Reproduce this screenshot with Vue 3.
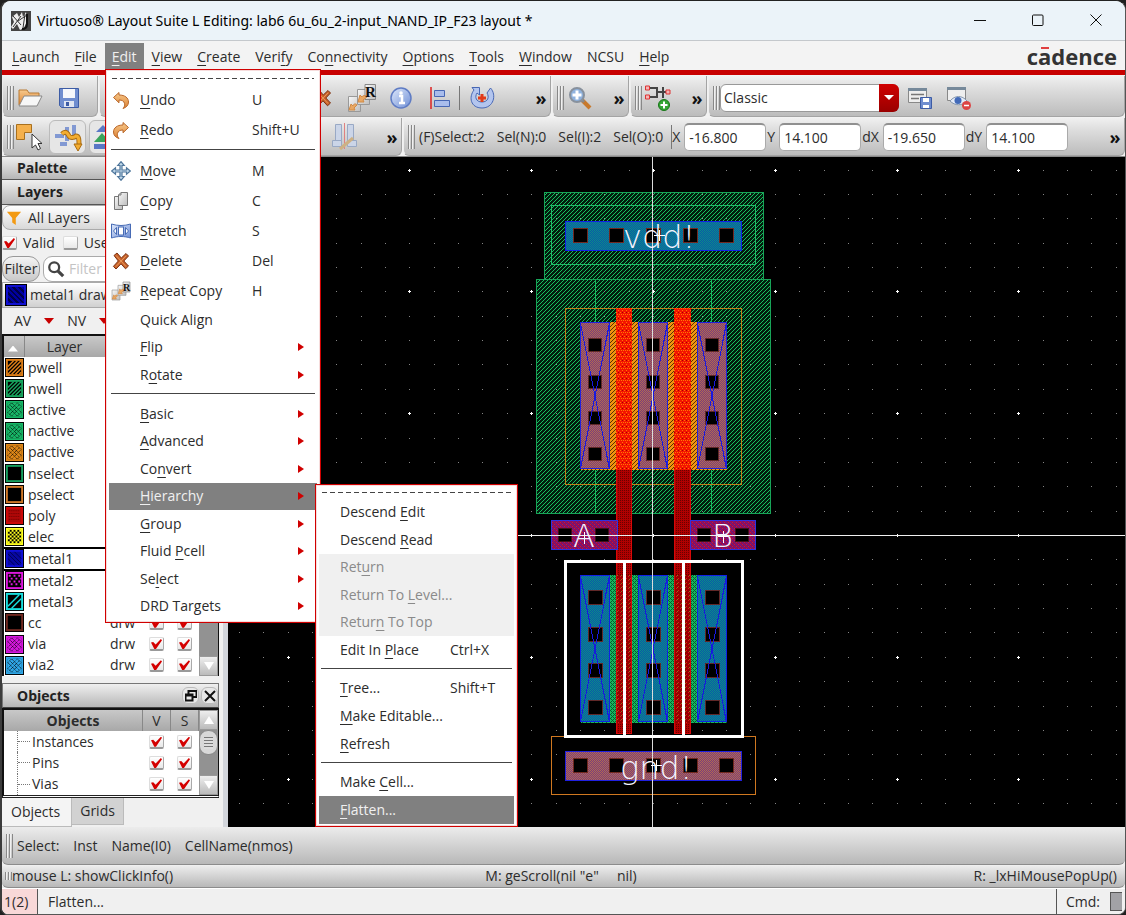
<script setup>
import { ref } from 'vue'

const menus = ['&Launch', '&File', '&Edit', '&View', '&Create', 'Veri&fy', 'Co&nnectivity', '&Options', '&Tools', '&Window', 'NCSU', '&Help']

const history = [
  { label: '&Undo', key: 'U', icon: 'undo' },
  { label: '&Redo', key: 'Shift+U', icon: 'redo' },
]
const actions = [
  { label: '&Move', key: 'M', icon: 'move' },
  { label: '&Copy', key: 'C', icon: 'copy' },
  { label: '&Stretch', key: 'S', icon: 'stretch' },
  { label: '&Delete', key: 'Del', icon: 'delete' },
  { label: '&Repeat Copy', key: 'H', icon: 'repeat' },
]
const transforms = [
  { label: 'Quick Align' },
  { label: '&Flip', sub: true },
  { label: 'R&otate', sub: true },
]
const groups = ['&Basic', '&Advanced', 'Co&nvert', '&Hierarchy', '&Group', 'Fluid &Pcell', 'Se&lect', 'DRD Targets']

const hierarchy = [
  { size: 'six', items: [
    { label: 'Descend &Edit' },
    { label: 'Descend &Read' },
    { label: 'Ret&urn', off: true },
    { label: 'Return To &Level...', off: true },
    { label: 'Retur&n To Top', off: true },
    { label: 'Edit In &Place', key: 'Ctrl+X' },
  ] },
  { size: 'three', items: [
    { label: '&Tree...', key: 'Shift+T' },
    { label: '&Make Editable...' },
    { label: '&Refresh' },
  ] },
  { size: 'two', items: [
    { label: 'Make &Cell...' },
    { label: '&Flatten...', hot: true },
  ] },
]

function parts(label) {
  const i = label.indexOf('&')
  if (i < 0) return [label, '', '']
  return [label.slice(0, i), label[i + 1], label.slice(i + 2)]
}

const layers = [
  ['pwell', '#e08018', 'hatch'], ['nwell', '#18a860', 'hatch'], ['active', '#18b868', 'cross'],
  ['nactive', '#18b868', 'cross'], ['pactive', '#e08818', 'cross'], ['nselect', '#18a060', 'none'],
  ['pselect', '#d07828', 'none'], ['poly', '#d00808', 'dots'], ['elec', '#ffff20', 'check'],
  ['metal1', '#1010d8', 'back'], ['metal2', '#e018e0', 'star'], ['metal3', '#18e0e0', 'slash'],
  ['cc', '#702820', 'none'], ['via', '#d818e0', 'cross'], ['via2', '#30a8e8', 'cross'],
].map(([name, color, fill]) => ({ name, color, fill, v: true, s: true }))

const objects = ['Instances', 'Pins', 'Vias']
const coords = [['X', '-16.800'], ['Y', '14.100'], ['dX', '-19.650'], ['dY', '14.100']]
const preset = ref('Classic')

const originX = 653
const originY = 535
const pitch = 1218 / 50
let minor = ''
let major = ''
for (let i = -18; i <= 60; i++) {
  for (let j = -16; j <= 40; j++) {
    const x = Math.round(originX + i * pitch)
    const y = Math.round(originY + j * pitch)
    if (i % 5 === 0 && j % 5 === 0) major += `M${x - 1} ${y}.5h3M${x}.5 ${y - 1}v3`
    else minor += `M${x} ${y}.5h1`
  }
}
const columns = [580.5, 638.5, 697.5]
const barContacts = [573, 609, 646, 683, 719]
const upperContacts = [338, 375, 411, 447]
const lowerContacts = [590, 627, 663, 700]
</script>

<template>
  <div class="window">
    <svg class="defs" aria-hidden="true">
      <defs>
        <linearGradient id="gOrange" x1="0" y1="0" x2="0" y2="1"><stop offset="0" stop-color="#f7c98c" /><stop offset="1" stop-color="#dd8233" /></linearGradient>
        <linearGradient id="gBlue" x1="0" y1="0" x2="1" y2="1"><stop offset="0" stop-color="#dfe9fb" /><stop offset="1" stop-color="#6f8fd6" /></linearGradient>
        <linearGradient id="gPage" x1="0" y1="0" x2="1" y2="1"><stop offset="0" stop-color="#f8f8f8" /><stop offset="1" stop-color="#bdbdbd" /></linearGradient>
      </defs>
      <symbol id="undo" viewBox="0 0 20 20"><path d="M2.500 7.500 8 2.500V5c6 0 9.500 3 9.500 7 0 3.500-2.500 5.500-5.500 6.500 1.500-1.800 2-3 1.600-4.800C13 11 11 10 8 10v2.800z" fill="url(#gOrange)" stroke="#b9672a" /></symbol>
      <symbol id="redo" viewBox="0 0 20 20"><path d="M17.500 7.500 12 2.500V5C6 5 2.500 8 2.500 12c0 3.500 2.500 5.500 5.500 6.500-1.500-1.800-2-3-1.600-4.800C7 11 9 10 12 10v2.800z" fill="url(#gOrange)" stroke="#b9672a" /></symbol>
      <symbol id="move" viewBox="0 0 20 20"><path d="M10 .7 13.200 4.500H11v4.500h4.500V6.800L19.300 10l-3.800 3.200V11H11v4.500h2.200L10 19.300l-3.200-3.800H9V11H4.500v2.200L.7 10l3.800-3.200V9H9V4.500H6.800z" fill="#c2d9ea" stroke="#50779c" stroke-width="1.200" /></symbol>
      <symbol id="copy" viewBox="0 0 20 20"><path d="M3.500 5.500h8v13h-8z" fill="url(#gPage)" stroke="#777" /><path d="m10 1.500h6.500v13h-9V4z" fill="url(#gPage)" stroke="#777" /><path d="M10 1.500V4H7.500" fill="none" stroke="#777" /></symbol>
      <symbol id="stretch" viewBox="0 0 20 20"><path d="M.5 3c6 2 13 2 19 0v14c-6-2-13-2-19 0z" fill="url(#gBlue)" stroke="#476bb5" /><rect x="7.500" y="6" width="5" height="8" fill="#fff" stroke="#476bb5" /><path d="M5.500 6.500 2.500 10l3 3.500zm9 0 3 3.500-3 3.500z" fill="#fff" stroke="#476bb5" /></symbol>
      <symbol id="delete" viewBox="0 0 20 20"><path d="m3 4.500 3-2.500 4.300 5L15 2.500 17.500 5l-4.700 5 4.700 5-3 2.800-4.500-5L5 18l-2.600-2.600L7.300 10z" fill="#c9622a" stroke="#7b3010" /><path d="m5 4.500 10 11M15 4.800 5 15.500" stroke="#e79a5c" /></symbol>
      <symbol id="repeat" viewBox="0 0 30 30"><path d="M1.500 13.500h12v15h-12z" fill="url(#gPage)" stroke="#999" /><path d="M10.500 6.500h12v15h-12z" fill="url(#gPage)" stroke="#999" /><path d="M18 1.500h10.500v15H18z" fill="url(#gPage)" stroke="#888" /><path d="m2 27 2-6 2 2c0-2 3-3 4-1l-3 3 1 2zM11 19l2-7 2 2c1-2 4-2 5 0l-4 3 1 2z" fill="#e9a763" stroke="#d08a45" /></symbol>
    </svg>

    <header class="title">
      <svg class="logo" viewBox="0 0 20 20"><rect width="20" height="20" fill="#444" /><path d="M1 6l5-4 2 4 3-5 1 5 3-5 1 9-3 7-4 2-3-6-4 5-2-2 3-5z" fill="#eee" /><path d="m2 5 8 9m-8 2 8-11m4-2-2 14m-5-7 9-6" stroke="#333" fill="none" /><path d="M16 3v10c0 3-2 5-5 5" stroke="#111" stroke-width="2" fill="none" /></svg>
      <h1>Virtuoso® Layout Suite L Editing: lab6 6u_6u_2-input_NAND_IP_F23 layout *</h1>
      <div class="controls">
        <button aria-label="Minimize"><svg viewBox="0 0 12 12"><path d="M0 6.500h12" /></svg></button>
        <button aria-label="Maximize"><svg viewBox="0 0 12 12"><rect x=".5" y="1" width="10.500" height="10.500" rx="1" /></svg></button>
        <button aria-label="Close"><svg viewBox="0 0 12 12"><path d="m.5.5 11 11m0-11-11 11" /></svg></button>
      </div>
    </header>

    <nav class="menubar">
      <button v-for="m in menus" :key="m" :class="{ open: m === '&Edit' }">{{ parts(m)[0] }}<u>{{ parts(m)[1] }}</u>{{ parts(m)[2] }}</button>
      <div class="brand">c<span class="macron">a</span>dence</div>

      <div class="menu edit-menu" role="menu">
        <div class="tear"></div>
        <button v-for="it in history" :key="it.label" class="item tall" role="menuitem">
          <svg class="mi"><use :href="'#' + it.icon" /></svg>
          <span class="label">{{ parts(it.label)[0] }}<u>{{ parts(it.label)[1] }}</u>{{ parts(it.label)[2] }}</span><span class="key">{{ it.key }}</span>
        </button>
        <hr>
        <button v-for="it in actions" :key="it.label" class="item tall" role="menuitem">
          <svg class="mi"><use :href="'#' + it.icon" /><text v-if="it.icon === 'repeat'" x="12" y="10" class="r-small">R</text></svg>
          <span class="label">{{ parts(it.label)[0] }}<u>{{ parts(it.label)[1] }}</u>{{ parts(it.label)[2] }}</span><span class="key">{{ it.key }}</span>
        </button>
        <div class="rows three">
          <button v-for="it in transforms" :key="it.label" class="item" role="menuitem">
            <span class="label">{{ parts(it.label)[0] }}<u>{{ parts(it.label)[1] }}</u>{{ parts(it.label)[2] }}</span><i v-if="it.sub" class="arrow"></i>
          </button>
        </div>
        <hr>
        <div class="rows eight">
          <div v-for="g in groups" :key="g" class="slot">
            <button class="item" :class="{ hot: g === '&Hierarchy' }" role="menuitem">
              <span class="label">{{ parts(g)[0] }}<u>{{ parts(g)[1] }}</u>{{ parts(g)[2] }}</span><i class="arrow"></i>
            </button>
            <div v-if="g === '&Hierarchy'" class="menu sub-menu" role="menu">
              <div class="tear"></div>
              <template v-for="(sec, n) in hierarchy" :key="n">
                <hr v-if="n">
                <div class="rows" :class="sec.size">
                  <button v-for="it in sec.items" :key="it.label" class="item" :class="{ hot: it.hot }" :disabled="it.off" role="menuitem">
                    <span class="label">{{ parts(it.label)[0] }}<u>{{ parts(it.label)[1] }}</u>{{ parts(it.label)[2] }}</span><span class="key">{{ it.key }}</span>
                  </button>
                </div>
              </template>
            </div>
          </div>
        </div>
      </div>
    </nav>

    <div class="toolbars">
      <div class="bar upper">
        <div class="seg files">
          <i class="grip"></i>
          <button aria-label="Open"><svg viewBox="0 0 26 26"><path d="M2 20V5h8l2 3h10v5" fill="url(#gOrange)" stroke="#b97a35" /><path d="M2 21 7 11h18l-5 10z" fill="#f7f7f7" stroke="#888" /></svg></button>
          <button aria-label="Save"><svg viewBox="0 0 26 26"><path d="M3.500 3.500h19v19h-17l-2-2z" fill="#6f8dcf" stroke="#3d5ca5" /><path d="M7 4h12v9H7z" fill="#f5f7fb" /><path d="M8 16h10v6H8z" fill="#dfe5f2" /><path d="M10 17h3v4h-3z" fill="#3d5ca5" /></svg></button>
        </div>
        <div class="seg edit-tools">
          <button aria-label="Delete"><svg class="small" viewBox="0 0 20 20"><use href="#delete" /></svg></button>
          <button aria-label="Repeat copy"><svg class="big" viewBox="0 0 30 30"><use href="#repeat" /><text x="18" y="14" class="r-mark">R</text></svg></button>
          <button aria-label="Properties"><svg viewBox="0 0 26 26"><circle cx="13" cy="13" r="10" fill="url(#gBlue)" stroke="#5f7cc4" stroke-width="1.500" /><path d="M11 11h3v7m-3 0h6" stroke="#fff" stroke-width="2.500" fill="none" /><circle cx="13" cy="8" r="1.800" fill="#fff" /></svg></button>
          <button aria-label="Align"><svg viewBox="0 0 26 26"><path d="M4 2v22" stroke="#d22" stroke-width="1.500" /><path d="M7.500 5.500h10v6h-10zm0 10h15v6h-15z" fill="#a9bdec" stroke="#4767b4" /></svg></button>
          <i class="line"></i>
          <button aria-label="Rotate"><svg viewBox="0 0 26 26"><path d="M3 2.500h7.500V10L8 8c-2.500 4-1 9 5 9s7.500-5 5-9l3.500-5c6.500 7 3 20-8.500 20S-.5 12 5 5z" fill="#b3c5ee" stroke="#4767b4" /><path d="M13 9v8m-4-4h8" stroke="#e23a18" stroke-width="3" /></svg></button>
          <span class="more">»</span>
        </div>
        <div class="seg zoom-tools">
          <i class="grip"></i>
          <button aria-label="Zoom in"><svg viewBox="0 0 26 26"><path d="m15 15 8 8" stroke="#c8792c" stroke-width="4" /><path d="m14 14 3 3" stroke="#888" stroke-width="3" /><circle cx="10" cy="10" r="7" fill="#8fb2de" stroke="#88919d" stroke-width="2" /><path d="M10 5.500v9M5.500 10h9" stroke="#fff" stroke-width="3" /></svg></button>
          <span class="more">»</span>
        </div>
        <div class="seg link-tools">
          <i class="grip"></i>
          <button aria-label="Add connection"><svg class="big" viewBox="0 0 30 30"><path d="M6 5h8v9H6m8-5h5m1-5v11m0-6h5" fill="none" stroke="#444" stroke-width="2" /><path d="M2.500 3h4v4h-4zm0 9h4v4h-4zM23 7h4v4h-4z" fill="#f3b5b5" stroke="#d33" /><circle cx="21" cy="22" r="5.500" fill="#33a533" stroke="#177517" /><path d="M21 18.500v7M17.500 22h7" stroke="#fff" stroke-width="2" /></svg></button>
          <span class="more">»</span>
        </div>
        <div class="seg grow">
          <i class="grip"></i>
          <label class="combo"><select v-model="preset" aria-label="Workspace"><option>Classic</option></select><i></i></label>
          <button aria-label="Save workspace"><svg viewBox="0 0 26 26"><path d="M2.500 3.500h18v14h-18z" fill="#eee" stroke="#888" /><path d="M2 3h19v3H2z" fill="#76899a" /><path d="M5 9.500h13M5 13.500h8" stroke="#777" stroke-width="1.500" /><path d="M14.500 12.500h11v11h-11z" fill="#6f8dcf" stroke="#3d5ca5" /><path d="M17 13h6v4h-6zm0 7h6v3h-6z" fill="#fff" /></svg></button>
          <button aria-label="Hide workspace"><svg viewBox="0 0 26 26"><path d="M2.500 2.500h18v13h-18z" fill="#eee" stroke="#888" /><path d="M2 2h19v3H2z" fill="#76899a" /><path d="M5 16c5-6 12-6 17 0-5 5-12 5-17 0z" fill="#e5ecf8" stroke="#8496ad" /><circle cx="13" cy="15.500" r="3.500" fill="#426ab8" /><circle cx="21.500" cy="20.500" r="4.500" fill="#dc4545" /><path d="M19 20.500h5" stroke="#fff" stroke-width="1.500" /></svg></button>
        </div>
      </div>
      <div class="bar lower">
        <div class="seg modes">
          <i class="grip"></i>
          <button aria-label="Select mode"><svg class="big" viewBox="0 0 30 30"><path d="M1.500 2.500h15v8h-7v7h-8z" fill="#f4b04c" stroke="#a8701e" /><path d="M17 12v14l3.500-3 2.500 5 2.500-1.500-2.500-5h4z" fill="#fff" stroke="#333" /></svg></button>
          <button class="pressed" aria-label="Stretch path"><svg class="big" viewBox="0 0 30 30"><path d="M2 12h9v4H2zM12 5h4v14h-4zM19 3h4v13h-4zM7 20h7v4H7z" fill="#8299d3" /><path d="M9 12c4-4 6 0 7 2s5 2 7 0c3 0 3 4 3 8" fill="none" stroke="#a86a10" stroke-width="5" /><path d="M9 12c4-4 6 0 7 2s5 2 7 0c3 0 3 4 3 8" fill="none" stroke="#f3ad31" stroke-width="3" /><path d="M21 22h8l-4 7z" fill="#f3ad31" stroke="#a86a10" /></svg></button>
          <button class="pressed" aria-label="Partial select"><svg class="big" viewBox="0 0 30 30"><path d="m10 3 7 7H3z" fill="#5a78c6" /><path d="m9 11 8 9H1z" fill="#3aa45c" /><path d="M1 22h16v5H1z" fill="#5a78c6" /></svg></button>
          <button class="last" aria-label="Edit guides"><svg class="big" viewBox="0 0 30 30"><path d="M5.500 2.500h6v16h-6zm12 0h6v16h-6zM2.500 18.500h9v6h-9zm15 0h9v6h-9z" fill="#cbd5e8" stroke="#99a9c5" /><path d="M14.500 1v26" stroke="#e08080" /><path d="m10 27 13-11" stroke="#cdb184" stroke-width="3" /></svg></button>
          <span class="more">»</span>
        </div>
        <div class="seg grow stats">
          <i class="grip"></i>
          <span>(F)Select:2</span><span>Sel(N):0</span><span>Sel(I):2</span><span>Sel(O):0</span>
          <i class="line"></i>
          <label v-for="c in coords" :key="c[0]" class="coord">{{ c[0] }}<input :value="c[1]"></label>
          <span class="more">»</span>
        </div>
      </div>
    </div>

    <main>
      <aside class="dock">
        <h2 class="first">Palette</h2>
        <h2>Layers</h2>
        <button class="all"><svg viewBox="0 0 18 18"><path d="M1 2h16l-6 7v8l-4-3V9z" fill="#f39a12" /></svg>All Layers</button>
        <div class="checks"><label><input type="checkbox" checked>Valid</label><label><input type="checkbox">Used</label></div>
        <div class="filter"><button>Filter</button><label class="search"><svg viewBox="0 0 20 20"><circle cx="8" cy="8" r="5.500" fill="none" stroke="#444" stroke-width="2.500" /><path d="m12 12 6 6" stroke="#444" stroke-width="3.500" /></svg><input placeholder="Filter" aria-label="Filter layers"></label></div>
        <button class="current"><i></i>metal1 drawing</button>
        <div class="avnv"><button>AV<i></i></button><button>NV<i></i></button><button>AS<i></i></button></div>

        <div class="grid-box layers">
          <table>
            <thead><tr><th class="c-sw"><i class="sort"></i></th><th class="c-name">Layer</th><th></th><th class="c-box"></th><th class="c-box"></th></tr></thead>
            <tbody>
              <tr v-for="l in layers" :key="l.name" :class="{ sel: l.name === 'metal1' }">
                <td class="c-sw"><svg class="swatch" viewBox="0 0 20 20" :style="{ color: l.color }">
                  <rect width="20" height="20" fill="#000" /><rect x="2" y="2" width="16" height="16" :fill="l.fill === 'dots' ? '#b00808' : l.fill === 'back' ? '#0808a0' : '#000'" stroke="currentColor" stroke-width="2" />
                  <path v-if="l.fill === 'hatch'" d="m3 9 6-6M3 13 13 3M3 17 17 3M7 17 17 7m-6 10 6-6m-2 6 2-2" stroke="currentColor" stroke-width="1.500" />
                  <g v-if="l.fill === 'cross'"><rect x="3" y="3" width="14" height="14" fill="currentColor" /><path d="m3 7 4-4 10 10-4 4L3 7m0 6L13 3l4 4L7 17l-4-4m2-8 10 10M5 15 15 5" fill="none" stroke="#000" stroke-dasharray="1 1" /></g>
                  <path v-if="l.fill === 'dots'" d="M4 5h12M4 8h12M4 11h12M4 14h12" stroke="#600" stroke-dasharray="1 1" />
                  <path v-if="l.fill === 'check'" d="M3 4h14M3 8h14M3 12h14M3 16h14M5 6h12M5 10h12M5 14h12" stroke="currentColor" stroke-width="2" stroke-dasharray="2 2" />
                  <path v-if="l.fill === 'back'" d="m3 5 12 12M3 10l7 7M5 3l12 12M10 3l7 7" stroke="#000050" />
                  <path v-if="l.fill === 'star'" d="M4 5h12M6 8h12M4 11h12M6 14h11" stroke="currentColor" stroke-width="2" stroke-dasharray="2 3" />
                  <path v-if="l.fill === 'slash'" d="M3 15 15 3M7 17 17 7" stroke="currentColor" stroke-width="1.500" />
                </svg></td>
                <td class="c-name">{{ l.name }}</td><td>drw</td>
                <td class="c-box"><input v-model="l.v" type="checkbox" :aria-label="l.name + ' visible'"></td>
                <td class="c-box"><input v-model="l.s" type="checkbox" :aria-label="l.name + ' selectable'"></td>
              </tr>
            </tbody>
          </table>
          <div class="scroll"><button aria-label="Scroll up"><i class="up"></i></button><span class="track"></span><button aria-label="Scroll down"><i class="down"></i></button></div>
        </div>

        <h2 class="objects-title">Objects
          <span><button aria-label="Float"><svg viewBox="0 0 12 12"><path d="M3.500 4V1h8v6H8M.5 4.500h7v6h-7zM.5 5.500h7" /></svg></button><button aria-label="Close panel"><svg viewBox="0 0 12 12"><path d="m1 1 10 10m0-10L1 11" /></svg></button></span>
        </h2>
        <div class="grid-box objects">
          <table>
            <thead><tr><th>Objects</th><th class="c-box">V</th><th class="c-box">S</th></tr></thead>
            <tbody>
              <tr v-for="o in objects" :key="o"><td class="tree"><i></i>{{ o }}</td>
                <td class="c-box"><input type="checkbox" checked :aria-label="o + ' visible'"></td>
                <td class="c-box"><input type="checkbox" checked :aria-label="o + ' selectable'"></td></tr>
            </tbody>
          </table>
          <div class="scroll"><button aria-label="Scroll up"><i class="up"></i></button><span class="track"><b></b></span><button aria-label="Scroll down"><i class="down"></i></button></div>
        </div>
        <div class="tabs"><button class="on">Objects</button><button>Grids</button></div>
      </aside>

      <div class="canvas">
        <svg shape-rendering="crispEdges">
          <defs>
            <pattern id="well" width="4" height="4" patternUnits="userSpaceOnUse"><rect width="4" height="4" fill="#021c0d" /><path d="M0 3h1v1H0zM1 2h1v1H1zM2 1h1v1H2zM3 0h1v1H3z" fill="#16c060" /></pattern>
            <pattern id="teal" width="2" height="2" patternUnits="userSpaceOnUse"><rect width="2" height="2" fill="#0a58a8" /><path d="M0 0h1v1H0zM1 1h1v1H1z" fill="#0c8c88" /></pattern>
            <pattern id="rose" width="2" height="2" patternUnits="userSpaceOnUse"><rect width="2" height="2" fill="#7c3c7c" /><path d="M0 0h1v1H0zM1 1h1v1H1z" fill="#b06c50" /></pattern>
            <pattern id="pact" width="4" height="4" patternUnits="userSpaceOnUse"><rect width="4" height="4" fill="#f09410" /><path d="M0 0h1v1H0zM3 1h1v1H3zM2 2h1v1H2zM1 3h1v1H1z" fill="#5a3200" /></pattern>
            <pattern id="nact" width="4" height="4" patternUnits="userSpaceOnUse"><rect width="4" height="4" fill="#14b860" /><path d="M0 0h1v1H0zM1 1h1v1H1zM3 1h1v1H3zM2 2h1v1H2zM1 3h1v1H1zM3 3h1v1H3z" fill="#065a2c" /></pattern>
            <pattern id="poly" width="2" height="2" patternUnits="userSpaceOnUse"><rect width="2" height="2" fill="#b00000" /><path d="M0 0h1v1H0z" fill="#680000" /></pattern>
            <pattern id="gateP" width="4" height="6" patternUnits="userSpaceOnUse"><rect width="4" height="6" fill="#f41400" /><path d="M0 0h1v1H0zM1 2h1v1H1zM2 4h1v1H2zM3 2h1v1H3z" fill="#ff7a00" /><path d="M2 0h1v1H2z" fill="#a00000" /></pattern>
            <pattern id="gateN" width="4" height="4" patternUnits="userSpaceOnUse"><rect width="4" height="4" fill="#980000" /><path d="M0 0h1v1H0zM2 2h1v1H2z" fill="#e01818" /><path d="M1 3h1v1H1z" fill="#8a7a20" /></pattern>
            <pattern id="plum" width="4" height="4" patternUnits="userSpaceOnUse"><rect width="4" height="4" fill="#980a50" /><path d="M0 0h1v1H0zM1 1h1v1H1zM2 2h1v1H2zM3 3h1v1H3z" fill="#5c2090" /><path d="M2 0h1v1H2zM0 2h1v1H0z" fill="#b81c48" /></pattern>
          </defs>
          <g transform="translate(-228 -157)">
            <g fill="url(#well)" stroke="#18a458"><rect x="544.500" y="192.500" width="219" height="87" /><rect x="536.500" y="279.500" width="234" height="234" /><rect x="551.500" y="205.500" width="204" height="59" fill="none" stroke="#20bc68" /></g>
            <path d="M595.500 280v233M711.500 280v233" stroke="#18b860" />
            <path :d="minor" stroke="#858585" />
            <path :d="major" stroke="#fff" fill="none" />
            <rect x="565.500" y="308.500" width="176" height="176" fill="none" stroke="#c08018" />
            <rect x="551.500" y="736.500" width="204" height="58" fill="none" stroke="#d07820" />
            <rect x="581" y="322" width="146" height="148" fill="url(#pact)" />
            <rect x="581" y="575" width="146" height="148" fill="url(#nact)" />
            <g fill="url(#poly)" stroke="#d80808"><rect x="616.500" y="308.500" width="15" height="425" /><rect x="674.500" y="308.500" width="16" height="425" /></g>
            <path d="M616 308h16v162h-16zM674 308h17v162h-17z" fill="url(#gateP)" />
            <path d="M617 575h14v148h-14zM675 575h15v148h-15z" fill="url(#gateN)" />
            <g v-for="x in columns" :key="x">
              <rect :x="x" y="322.500" width="29" height="146" fill="url(#rose)" stroke="#2020e0" />
              <rect :x="x" y="575.500" width="29" height="146" fill="url(#teal)" stroke="#1020e8" />
              <g fill="#000" stroke="#602828"><rect v-for="y in upperContacts" :key="y" :x="x + 8" :y="y + .5" width="13" height="13" /><rect v-for="y in lowerContacts" :key="y" :x="x + 8" :y="y" width="14" height="14" /></g>
              <path :d="`M${x} 323l29 146m0-146l-29 146M${x} 576l29 146m0-146l-29 146`" stroke="#1818e0" fill="none" />
            </g>
            <rect x="565.500" y="221.500" width="176" height="29" fill="url(#teal)" stroke="#1020e8" />
            <rect x="565.500" y="751.500" width="176" height="29" fill="url(#rose)" stroke="#2020e0" />
            <g fill="#000" stroke="#702820"><template v-for="x in barContacts" :key="x"><rect :x="x + .5" y="228.500" width="14" height="14" /><rect :x="x + .5" y="758.500" width="14" height="14" /></template></g>
            <g fill="url(#plum)" stroke="#3030e0"><rect x="551.500" y="520.500" width="66" height="29" /><rect x="690.500" y="520.500" width="65" height="29" /></g>
            <g fill="#000" stroke="#401018"><rect v-for="x in [558, 595, 697, 735]" :key="x" :x="x + .5" y="528.500" width="13" height="13" /></g>
            <path d="M652.500 157v1200" stroke="#dcdcdc" />
            <path d="M228 535.500h2400" stroke="#f0f0f0" />
            <path d="M565 561h177v175H565zM624 561v175M683 561v175" fill="none" stroke="#fff" stroke-width="3" />
            <path d="M654 235.500h11M659.500 230v11M581 538.500h8M584.500 532v12M718 536.500h10M723.500 531v12M651 765.500h11M656.500 760v11" stroke="#fff" fill="none" />
            <g class="pins"><text x="623" y="248">vdd!</text><text x="620" y="779">gnd!</text><text x="573" y="547">A</text><text x="712" y="547">B</text></g>
          </g>
        </svg>
      </div>
    </main>

    <footer>
      <div class="select-bar"><i class="grip"></i><span>Select:</span><span>Inst</span><span>Name(I0)</span><span>CellName(nmos)</span></div>
      <div class="mouse-bar"><span class="left"><i class="grip small"></i>mouse L: showClickInfo()</span><span class="mid">M: geScroll(nil "e"&nbsp;&nbsp;&nbsp;&nbsp;&nbsp;nil)</span><span class="right">R: _lxHiMousePopUp()</span></div>
      <div class="status"><span class="count">1(2)</span><span class="msg">Flatten...</span><span class="cmd">Cmd:<i></i></span></div>
    </footer>
  </div>
</template>

<style>
html { background: #202020; }
body { margin: 0; }
</style>

<style scoped>
* { box-sizing: border-box; }
.window { display: flex; flex-direction: column; min-height: 100vh; border: 1px solid #555; border-top-color: #222; border-left: 2px solid #3c3c3c; border-radius: 10px 10px 8px 8px; background: #efefef; overflow: hidden; font: 14px/20px "Open Sans", "Noto Sans", sans-serif; color: #2c2c2c; }
button { font: inherit; color: inherit; background: none; border: 0; padding: 0; margin: 0; white-space: nowrap; }
input, select { font: inherit; color: inherit; margin: 0; }
.defs { position: absolute; width: 0; height: 0; }
.r-mark { font: bold 15px "Liberation Serif", serif; fill: #111; }
.r-small { font: bold 10px "Liberation Serif", serif; fill: #111; }
u { text-underline-offset: 3px; text-decoration-thickness: 1px; text-decoration-skip-ink: none; }

.title { display: flex; align-items: center; height: 40px; padding-left: 9px; background: #ebf3f9; border-bottom: 1px solid #c4c8cc; color: #000; }
.title .logo { width: 20px; height: 20px; margin-right: 6px; }
h1 { margin: 0; font: 400 14px/20px "Noto Sans", "Open Sans", sans-serif; flex: 1; white-space: nowrap; }
.controls { display: flex; }
.controls button { width: 58px; height: 32px; }
.controls svg { width: 12px; height: 12px; fill: none; stroke: #111; }

.menubar { position: relative; display: flex; align-items: stretch; gap: 1px; height: 34px; padding-left: 3px; background: #f3f3f3; border-bottom: 5px solid #c80000; }
.menubar > button { padding: 0 7px; margin-top: 2px; }
.menubar > .open { background: #808080; color: #f0f0f0; }
.brand { margin-left: auto; padding-right: 8px; font-size: 22px; line-height: 31px; font-weight: 700; color: #333; }
.macron { position: relative; }
.macron::before { content: ""; position: absolute; left: 3px; top: 6px; width: 8px; height: 2px; background: #e04040; }

.menu { position: absolute; z-index: 5; background: #fff; border: 1px solid #d00000; padding: 0 3px 2px; box-shadow: inset 0 0 0 1px #f6dcdc; }
.edit-menu { left: 103px; top: 28px; width: 216px; }
.sub-menu { left: 206px; top: 1px; width: 203px; }
.tear { height: 15px; margin: 0 3px; background: linear-gradient(#444, #444) 0 8px / 100% 1px no-repeat; -webkit-mask: repeating-linear-gradient(90deg, #000 0 5px, transparent 5px 8px); mask: repeating-linear-gradient(90deg, #000 0 5px, transparent 5px 8px); }
.sub-menu .tear { height: 14px; background-position: 0 7px; }
.menu hr { height: 11px; border: 0; margin: 0 2px; background: linear-gradient(#444, #444) 0 4px / 100% 1px no-repeat; }
.rows { display: grid; grid-auto-rows: 1fr; }
.rows.two { height: 55px; }
.rows.three { height: 83px; }
.rows.six { height: 165px; }
.rows.eight { height: 220px; }
.slot { position: relative; display: grid; }
.item { position: relative; display: flex; align-items: center; width: 100%; padding-left: 31px; text-align: left; }
.sub-menu .item { padding-left: 21px; }
.item.tall { height: 30px; }
.item .mi { position: absolute; left: 2px; top: 5px; width: 20px; height: 20px; }
.item .label { width: 112px; }
.sub-menu .label { width: 110px; }
.item:disabled { background: #f0f0f0; color: #8a8a8a; }
.item.hot { background: #808080; color: #f0f0f0; }
.arrow { border: 4px solid transparent; border-left: 6px solid #d00000; border-right: 0; }
.item .arrow { margin-left: 46px; }

.toolbars { display: flex; flex-direction: column; gap: 1px; padding-top: 1px; border-bottom: 1px solid #888; background: #f2f2f2; }
.bar { display: flex; gap: 1px; height: 41px; }
.bar.lower { height: 38px; }
.seg { display: flex; align-items: center; padding-left: 4px; background: linear-gradient(#f0f0f0, #dcdcdc 35%, #bcbcbc); border: 1px solid #a4a4a4; border-top: 0; border-left-color: #eee; border-radius: 0 0 6px 6px; min-width: 0; flex: none; }
.bar.upper .seg { padding-top: 4px; }
.seg.grow { flex: 1; }
.seg button { display: grid; place-items: center; width: 39px; height: 34px; flex: none; }
.seg svg { width: 26px; height: 26px; }
.seg svg.big { width: 30px; height: 30px; }
.seg svg.small { width: 20px; height: 20px; }
.grip { width: 7px; height: 24px; flex: none; background: repeating-linear-gradient(90deg, #888 0 1px, #f0f0f0 1px 2px, transparent 2px 3px); }
.grip + button { margin-left: -4px; }
.line { width: 1px; height: 24px; background: #777; flex: none; }
.more { margin-left: auto; width: 18px; font-size: 18px; font-weight: 700; color: #111; text-align: center; }
.files { width: 96px; }
.edit-tools { width: 452px; padding-left: 203px; }
.edit-tools .line { margin-right: 2px; }
.zoom-tools { width: 77px; }
.link-tools { width: 77px; }
.modes { width: 400px; }
.modes .pressed { background: #e6e6e6; border: 1px solid #bbb; border-radius: 6px; width: 37px; margin-right: 3px; }
.modes .last { margin-left: 196px; }
.combo { position: relative; display: flex; width: 179px; height: 28px; }
.combo select { appearance: none; width: 100%; padding: 0 3px; border: 1px solid #999; border-radius: 6px; background: #fff; }
.combo i { position: absolute; right: 0; top: 0; width: 20px; height: 28px; background: linear-gradient(#d00000, #900); border-radius: 0 6px 6px 0; pointer-events: none; }
.combo i::after { content: ""; position: absolute; left: 5px; top: 11px; border: 5px solid transparent; border-top-color: #fff; border-bottom: 0; }
.stats span:not(.more) { margin-left: 4px; margin-right: 8px; white-space: nowrap; }
.coord { display: flex; align-items: center; gap: 4px; margin-right: 1px; }
.coord input { width: 82px; height: 28px; padding: 0 4px; border: 1px solid #aaa; border-top: 2px solid #909090; border-radius: 5px; background: #fff; }

main { display: flex; flex: 1; }
.dock { width: 226px; flex: none; display: flex; flex-direction: column; border-right: 5px solid #d2d5db; padding-right: 4px; background: #f0f0f0; }
h2 { display: flex; align-items: center; height: 25px; margin: 0; padding-left: 15px; font-size: 14px; font-weight: 700; color: #222; background: linear-gradient(#f0f0f0, #b6b6b6); border-bottom: 1px solid #555; }
h2.first { height: 23px; }
.all { display: flex; align-items: center; gap: 6px; height: 25px; padding-left: 3px; border: 1px solid #aaa; border-radius: 8px 0 0 8px; background: linear-gradient(#fff, #d8d8d8); }
.all svg { width: 16px; height: 16px; }
.checks { display: flex; align-items: center; gap: 8px; height: 26px; }
.checks label { display: flex; align-items: center; gap: 6px; }
input[type="checkbox"] { appearance: none; position: relative; display: block; flex: none; width: 15px; height: 14px; border: 1px solid #ddd; border-right-color: #aaa; border-bottom: 2px solid #999; background: linear-gradient(#fff, #e8e8e8); border-radius: 2px; }
input[type="checkbox"]:checked::before { content: ""; position: absolute; inset: 1px 1px 0; background: #d40000; clip-path: polygon(0 35%, 20% 30%, 42% 55%, 90% 0, 100% 12%, 45% 100%, 30% 100%); }
.filter { display: flex; gap: 3px; height: 26px; }
.filter button { width: 38px; border: 1px solid #999; border-radius: 11px; background: linear-gradient(#f4f4f4, #c8c8c8); }
.search { flex: 1; display: flex; align-items: center; padding-left: 3px; border: 1px solid #aaa; border-radius: 9px; background: #fff; }
.search svg { width: 18px; height: 18px; flex: none; }
.search input { width: 100px; border: 0; background: none; padding: 0 0 0 4px; outline: 0; }
.search input::placeholder { color: #c4c4c4; }
.current { display: flex; align-items: center; gap: 4px; height: 26px; padding-left: 3px; border: 1px solid #aaa; background: linear-gradient(#fff, #d0d0d0); }
.current i { width: 20px; height: 20px; border: 2px solid #1010d0; outline: 1px solid #000; background: repeating-linear-gradient(45deg, #0000a0 0 2px, #000048 2px 4px); }
.avnv { display: flex; align-items: center; height: 26px; padding-left: 12px; gap: 13px; }
.avnv button { display: flex; align-items: center; gap: 13px; }
.avnv i { border: 5px solid transparent; border-top: 6px solid #c80000; border-bottom: 0; }
.grid-box { display: flex; border: solid #111; border-width: 2px 1px 1px 2px; background: #fff; overflow: hidden; }
.grid-box.layers { height: 342px; border-bottom: 0; }
.grid-box.objects { height: 90px; border-bottom: 3px double #222; }
table { width: 195px; flex: none; border-collapse: collapse; table-layout: fixed; }
.layers table { height: 340px; }
th { height: 21px; padding: 0; font-weight: 400; background: linear-gradient(#c8c8c8, #a8a8a8); border-right: 1px solid #888; }
.objects th:first-child { font-weight: 700; }
td { height: 21px; padding: 0; line-height: 20px; }
th.c-sw { width: 20px; }
.c-name { width: 81px; }
td.c-name { padding-left: 4px; }
td.c-name + td { padding-left: 5px; }
.c-box { width: 28px; }
td .swatch { display: block; width: 19px; height: 19px; margin-left: 1px; }
td.c-box input { margin: 0 auto; }
.sel td { border-top: 2px solid #000; border-bottom: 2px solid #000; }
.sort { display: block; margin: 4px 0 0 4px; width: 10px; height: 6px; background: #fff; clip-path: polygon(50% 0, 100% 100%, 0 100%); }
.scroll { display: flex; flex-direction: column; flex: 1; background: #ccc; }
.scroll button { height: 20px; display: grid; place-items: center; background: linear-gradient(#eee, #bbb); border: 1px solid #999; }
.scroll i { border: 5px solid transparent; }
.scroll .up { border-bottom: 8px solid #fff; border-top: 0; }
.scroll .down { border-top: 8px solid #fff; border-bottom: 0; }
.track { flex: 1; background: #929292; }
.track b { display: block; height: 25px; border: 1px solid #888; border-radius: 9px; background: repeating-linear-gradient(#777 0 1px, #ddd 1px 3px) center / 9px 12px no-repeat, #d8d8d8; }
.objects-title { margin-top: 7px; justify-content: space-between; border: 1px solid #777; border-bottom-color: #444; padding-left: 14px; }
.objects-title span { display: flex; gap: 2px; }
.objects-title button { display: grid; place-items: center; width: 17px; height: 17px; border-radius: 6px; background: #e8e8e8; border: 1px solid #bbb; }
.objects-title svg { width: 12px; height: 12px; fill: none; stroke: #111; stroke-width: 2; }
.tree { position: relative; padding-left: 28px; }
.tree::before { content: ""; position: absolute; left: 13px; top: 0; bottom: 0; border-left: 1px dotted #777; }
.tree i { position: absolute; left: 14px; top: 10px; width: 12px; border-top: 1px dotted #777; }
.tabs { display: flex; align-items: flex-start; flex: 1; min-height: 28px; }
.tabs button { height: 27px; padding: 0 8px; background: #d2d2d2; border: 1px solid #bbb; border-left: 0; border-top: 0; }
.tabs .on { height: 29px; padding: 0 11px 0 9px; background: #f4f4f4; }
.canvas { position: relative; flex: 1; min-width: 0; background: #000; }
.canvas svg { position: absolute; inset: 0; width: 100%; height: 100%; }
.pins { font: 200 32px "DejaVu Sans", sans-serif; fill: #f4f4ff; }

footer { display: flex; flex-direction: column; }
.select-bar, .mouse-bar { background: linear-gradient(#ececec, #b8b8b8); border-bottom: 1px solid #8c8c8c; border-radius: 0 0 6px 6px; }
.select-bar { display: flex; align-items: center; gap: 14px; height: 38px; padding-left: 4px; }
.select-bar .grip { margin-right: -10px; }
.mouse-bar { display: grid; grid-template-columns: 1fr auto 1fr; align-items: center; height: 22px; line-height: 18px; margin-top: 1px; padding: 0 8px 1px 3px; white-space: nowrap; }
.mouse-bar .left { display: flex; align-items: center; }
.grip.small { height: 8px; }
.right { text-align: right; }
.status { display: flex; align-items: stretch; height: 26px; line-height: 25px; background: #f0f0f0; border-top: 1px solid #fff; }
.count { width: 36px; padding-left: 2px; background: #f8d8d8; border-right: 1px solid #555; }
.msg { padding-left: 10px; flex: 1; }
.cmd { display: flex; align-items: center; gap: 10px; padding: 0 3px 0 9px; border-left: 1px solid #555; }
.cmd i { width: 12px; height: 19px; background: #a2a2a6; border: solid #555; border-width: 1px 0 1px 1px; }
</style>
